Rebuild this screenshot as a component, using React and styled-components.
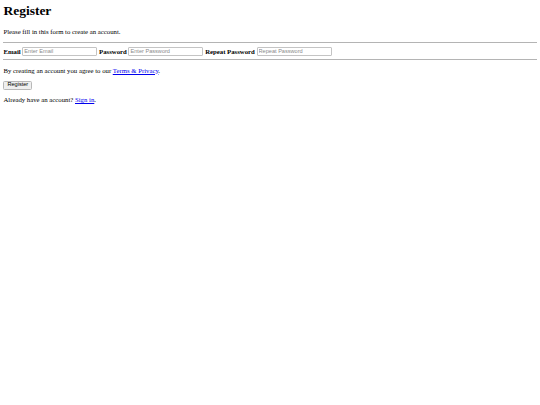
import React from 'react'
import styled, { createGlobalStyle } from 'styled-components'

const Global = createGlobalStyle`
  html, body {
    background: #ffffff;
  }
  body {
    margin: 3.4px;
    font-family: "Liberation Serif", "Times New Roman", serif;
    font-size: 6.75px;
    color: #000000;
  }
`

const Container = styled.div`
  display: block;
`
const Title = styled.h1`
  font-size: 13.5px;
  font-weight: bold;
  margin: 0 0 9px;
`
const Text = styled.p`
  margin: 6.75px 0;
`
const Rule = styled.hr`
  margin: 3.4px 0;
  border: 0;
  border-top: 1px solid #b4b4b4;
  height: 0;
`
const Label = styled.label`
  font-weight: bold;
`
const Input = styled.input`
  font-family: "Liberation Sans", Arial, sans-serif;
  font-size: 5.6px;
  width: 71px;
  height: 7px;
  padding: 0 1px;
  margin: 0;
  border: 1px solid #c4c4c4;
  border-radius: 1px;
  box-sizing: content-box;
  vertical-align: baseline;
  outline: none;
  &::placeholder {
    color: #8a8a8a;
  }
`
const Link = styled.a`
  color: #0000ee;
  text-decoration: underline;
`
const Button = styled.button`
  font-family: "Liberation Sans", Arial, sans-serif;
  font-size: 5.6px;
  height: 9px;
  padding: 0 3px;
  margin: 0;
  background: #efefef;
  border: 1px solid #b8b8b8;
  border-radius: 1.5px;
  color: #000000;
  line-height: 1;
`

export default function App() {
  return (
    <form>
      <Global />
      <Container>
        <Title>Register</Title>
        <Text>Please fill in this form to create an account.</Text>
        <Rule />
        <Label htmlFor="email">Email</Label>{' '}
        <Input type="text" placeholder="Enter Email" name="email" />{' '}
        <Label htmlFor="psw">Password</Label>{' '}
        <Input type="password" placeholder="Enter Password" name="psw" />{' '}
        <Label htmlFor="psw-repeat">Repeat Password</Label>{' '}
        <Input type="password" placeholder="Repeat Password" name="psw-repeat" />
        <Rule />
        <Text>
          By creating an account you agree to our <Link href="#">Terms &amp; Privacy</Link>.
        </Text>
        <Button type="submit">Register</Button>
      </Container>
      <Container>
        <Text>
          Already have an account? <Link href="#">Sign in</Link>.
        </Text>
      </Container>
    </form>
  )
}
